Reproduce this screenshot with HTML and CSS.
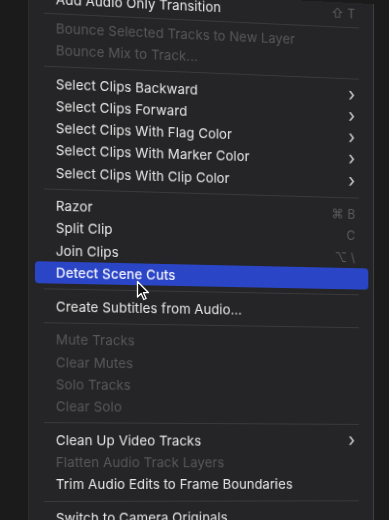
FILE: index.html
```html
<!DOCTYPE html>
<html>
<head>
<meta charset="utf-8">
<link rel="stylesheet" href="styles.css">
</head>
<body>
<div class="stage">
  <div class="menu">
    <div class="item"><span class="label">Add Audio Only Transition</span><span class="key">⇧ T</span></div>
    <div class="sep sep-tight"></div>
    <div class="item disabled"><span class="label">Bounce Selected Tracks to New Layer</span></div>
    <div class="item disabled"><span class="label">Bounce Mix to Track...</span></div>
    <div class="sep"></div>
    <div class="item"><span class="label">Select Clips Backward</span><span class="chev">›</span></div>
    <div class="item"><span class="label">Select Clips Forward</span><span class="chev">›</span></div>
    <div class="item"><span class="label">Select Clips With Flag Color</span><span class="chev">›</span></div>
    <div class="item"><span class="label">Select Clips With Marker Color</span><span class="chev">›</span></div>
    <div class="item"><span class="label">Select Clips With Clip Color</span><span class="chev">›</span></div>
    <div class="sep"></div>
    <div class="item"><span class="label">Razor</span><span class="key">⌘ B</span></div>
    <div class="item"><span class="label">Split Clip</span><span class="key">C</span></div>
    <div class="item"><span class="label">Join Clips</span><span class="key">⌥ \</span></div>
    <div class="item active"><span class="label">Detect Scene Cuts</span></div>
    <div class="sep"></div>
    <div class="item"><span class="label">Create Subtitles from Audio...</span></div>
    <div class="sep"></div>
    <div class="item disabled"><span class="label">Mute Tracks</span></div>
    <div class="item disabled"><span class="label">Clear Mutes</span></div>
    <div class="item disabled"><span class="label">Solo Tracks</span></div>
    <div class="item disabled"><span class="label">Clear Solo</span></div>
    <div class="sep"></div>
    <div class="item"><span class="label">Clean Up Video Tracks</span><span class="chev">›</span></div>
    <div class="item disabled"><span class="label">Flatten Audio Track Layers</span></div>
    <div class="item"><span class="label">Trim Audio Edits to Frame Boundaries</span></div>
    <div class="sep"></div>
    <div class="item"><span class="label">Switch to Camera Originals</span></div>
  </div>
  <svg class="cursor" width="14" height="21" viewBox="-1.5 -1.5 14 21">
    <path d="M0 0 L0 15.5 L3.6 12 L6.3 18 L8.6 17 L6 11.2 L11 11.2 Z" fill="#111" stroke="#fff" stroke-width="1.3" stroke-linejoin="round"/>
  </svg>
</div>
</body>
</html>
```
FILE: styles.css
```css
html, body {
  margin: 0;
  padding: 0;
  background: #1b1b1c;
}
.stage {
  position: relative;
  width: 389px;
  height: 520px;
  overflow: hidden;
  perspective: 1000px;
  perspective-origin: 28px 480px;
  font-family: Inter, "DejaVu Sans", sans-serif;
  font-size: 13.6px;
}
.menu {
  margin-left: 28px;
  margin-top: -13px;
  width: 360px;
  box-sizing: border-box;
  background: #252527;
  border-left: 1px solid #2c2c2e;
  border-right: 1px solid #3e3e40;
  transform-origin: 0 480px;
  transform: rotateY(5.7deg);
  padding-bottom: 20px;
}
.item {
  display: flex;
  align-items: center;
  height: 22.2px;
  margin: 0 5px 0 6px;
  padding: 0 14px 0 21px;
  border-radius: 4px;
  color: #e8e8e8;
  letter-spacing: 0.1px;
}
.label {
  flex: 1;
  white-space: nowrap;
}
.disabled {
  color: #58585a;
}
.active {
  background: #2a45c6;
  color: #f4f4ff;
  font-weight: 500;
}
.key {
  color: #5d5d60;
  font-size: 13px;
}
.chev {
  color: #d6d6d6;
  font-size: 19px;
  line-height: 1;
  margin-top: -3px;
}
.sep {
  height: 11.6px;
  display: flex;
  align-items: center;
  margin: 0 15px;
}
.sep::before {
  content: "";
  flex: 1;
  height: 1px;
  background: #3a3a3c;
}
.sep-tight {
  height: 6.5px;
}
.cursor {
  position: absolute;
  left: 136px;
  top: 280px;
}
```
